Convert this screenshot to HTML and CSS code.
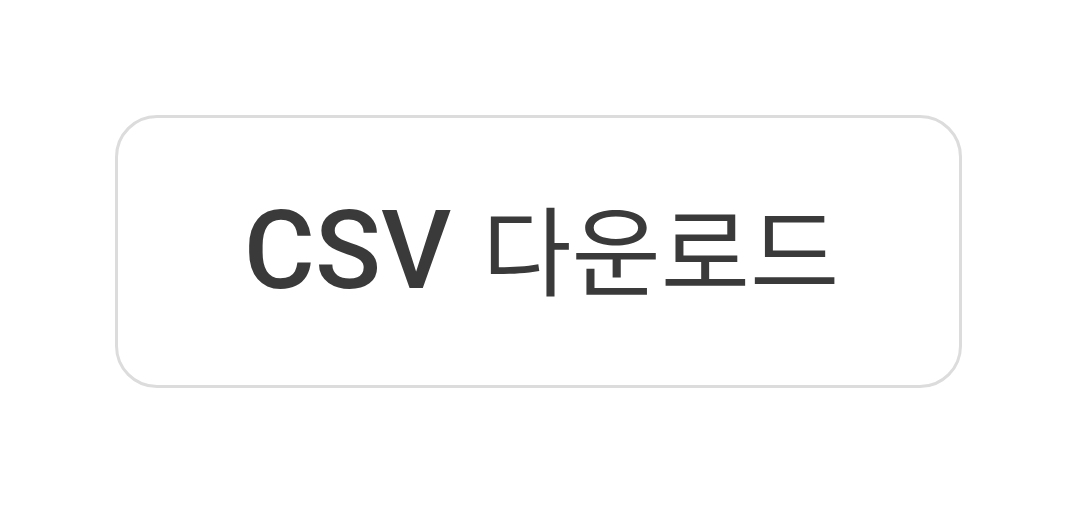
FILE: index.html
```html
<!DOCTYPE html>
<html lang="ko">
<head>
    <meta charset="UTF-8">
    <meta name="viewport" content="width=device-width, initial-scale=1.0">
    <title>CSV 다운로드</title>
    <link rel="stylesheet" href="styles.css">
</head>
<body>
    <div class="container">
        <button class="download-btn" type="button">
            <span class="btn-text"><span class="btn-format">CSV</span><span class="btn-label">다운로드</span></span>
        </button>
    </div>
</body>
</html>
```

FILE: styles.css
```css
body {
    margin: 0;
    background: #fff;
    font-family: Roboto, "Noto Sans CJK KR", sans-serif;
}
.container {
    padding: 115px 0 0 115px;
}
.download-btn {
    display: flex;
    align-items: center;
    justify-content: center;
    width: 847px;
    height: 273px;
    box-sizing: border-box;
    background: #fff;
    border: 3px solid #dcdcdc;
    border-radius: 42px;
    color: #3a3a3a;
    font-family: inherit;
    padding: 0 0 0 6px;
    cursor: pointer;
}
.btn-text {
    line-height: 1;
    white-space: nowrap;
}
.btn-format {
    font-size: 109px;
    font-weight: 500;
    margin-right: 31px;
}
.btn-label {
    font-family: "Noto Sans CJK KR", sans-serif;
    font-size: 97px;
    font-weight: 400;
}
```
